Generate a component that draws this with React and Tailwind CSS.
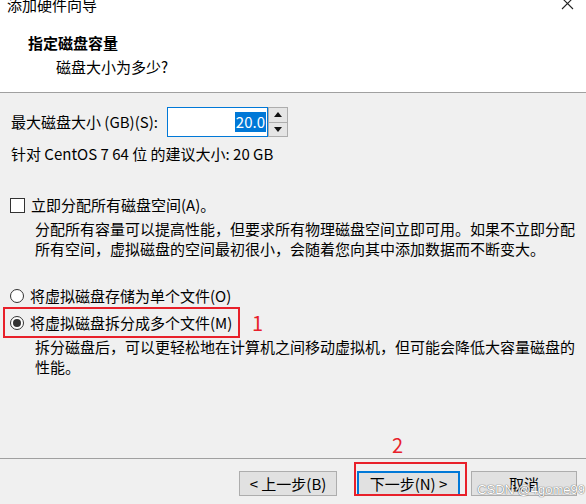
import React from 'react';

const font = { fontFamily: '"Microsoft YaHei", "Noto Sans CJK SC", "Noto Sans", sans-serif' };

function Radio({ checked }) {
  return (
    <span className="w-[14px] h-[14px] rounded-full border border-[#333] bg-white flex items-center justify-center shrink-0">
      {checked && <span className="w-[8px] h-[8px] rounded-full bg-[#333]"></span>}
    </span>
  );
}

export default function App() {
  return (
    <div className="w-[586px] h-[504px] bg-[#f0f0f0] overflow-hidden text-[15px] text-black leading-[20px]" style={font}>
      {/* Header */}
      <div className="h-[98px] bg-white border-b border-[#a0a0a0] relative">
        <div className="px-[7px] -mt-[5px] leading-[20px]">添加硬件向导</div>
        <svg className="absolute right-[12px] top-[2px]" width="13" height="13" viewBox="0 0 13 13">
          <path d="M1 1 L12 12 M12 1 L1 12" stroke="#222" strokeWidth="1.1" fill="none" />
        </svg>
        <div className="pl-[28px] mt-[18px] font-bold">指定磁盘容量</div>
        <div className="pl-[56px] mt-[4px]">磁盘大小为多少?</div>
      </div>

      {/* Body */}
      <div className="h-[365px] flex flex-col pl-[11px] pt-[14px]">
        <div className="flex items-center h-[30px]">
          <span className="w-[156px] whitespace-nowrap">最大磁盘大小 (GB)(S):</span>
          <div className="w-[101px] h-[30px] bg-white border border-[#0078d7] flex items-center justify-end pr-[1px]">
            <span className="bg-[#0078d7] text-white leading-[20px] px-[1px]">20.0</span>
          </div>
          <div className="flex flex-col h-[30px] w-[20px]">
            <div className="flex-1 border border-[#adadad] bg-[#e5e5e5] flex items-center justify-center">
              <svg width="8" height="5" viewBox="0 0 8 5"><path d="M0 5 L4 0 L8 5 Z" fill="#111" /></svg>
            </div>
            <div className="flex-1 border border-t-0 border-[#adadad] bg-[#e5e5e5] flex items-center justify-center">
              <svg width="8" height="5" viewBox="0 0 8 5"><path d="M0 0 L4 5 L8 0 Z" fill="#111" /></svg>
            </div>
          </div>
        </div>
        <div className="mt-[7px] whitespace-nowrap">针对 CentOS 7 64 位 的建议大小: 20 GB</div>

        <div className="flex items-center h-[20px] mt-[31px] -ml-[1px]">
          <span className="w-[15px] h-[15px] border border-[#333] bg-white mr-[6px] shrink-0"></span>
          <span className="whitespace-nowrap">立即分配所有磁盘空间(A)。</span>
        </div>
        <div className="pl-[24px] mt-[4px]">
          <div className="whitespace-nowrap">分配所有容量可以提高性能，但要求所有物理磁盘空间立即可用。如果不立即分配</div>
          <div className="whitespace-nowrap">所有空间，虚拟磁盘的空间最初很小，会随着您向其中添加数据而不断变大。</div>
        </div>

        <div className="flex items-center h-[20px] mt-[27px] -ml-[1px]">
          <Radio />
          <span className="ml-[6px] whitespace-nowrap">将虚拟磁盘存储为单个文件(O)</span>
        </div>
        <div className="flex items-center mt-[1px]">
          <div className="-ml-[8px] w-[237px] h-[31px] border-2 border-[#e8202a] flex items-center pl-[5px]">
            <Radio checked />
            <span className="ml-[6px] whitespace-nowrap">将虚拟磁盘拆分成多个文件(M)</span>
          </div>
          <span className="ml-[12px] text-[#e8202a] text-[20px] leading-[24px]">1</span>
        </div>
        <div className="pl-[24px] -mt-[1px]">
          <div className="whitespace-nowrap">拆分磁盘后，可以更轻松地在计算机之间移动虚拟机，但可能会降低大容量磁盘的</div>
          <div>性能。</div>
        </div>

        <div className="mt-auto mb-[1px] h-[24px] pl-[381px] text-[#e8202a] text-[20px] leading-[24px]">2</div>
      </div>

      {/* Footer */}
      <div className="border-t border-[#a0a0a0] relative h-[41px]">
        <div className="flex items-start pt-[12px] pl-[239px]">
          <div className="w-[98px] h-[25px] bg-[#e1e1e1] border border-[#adadad] flex items-center justify-center whitespace-nowrap">&lt; 上一步(B)</div>
          <div className="relative ml-[20px]">
            <div className="w-[103px] h-[25px] bg-[#e1e1e1] border-2 border-[#0078d7] flex items-center justify-center whitespace-nowrap">下一步(N) &gt;</div>
            <div className="absolute -left-[3px] -top-[9px] w-[113px] h-[34px] border-2 border-[#e8202a]"></div>
          </div>
          <div className="ml-[11px] w-[106px] h-[25px] bg-[#e1e1e1] border border-[#adadad] flex items-center justify-center">取消</div>
        </div>
        <div className="absolute right-[1px] top-[21px] text-[13px] text-white whitespace-nowrap" style={{ fontFamily: '"Liberation Sans", sans-serif', textShadow: '0 0 1px #666, 0 0 1px #666' }}>CSDN @4gome99</div>
      </div>
    </div>
  );
}
